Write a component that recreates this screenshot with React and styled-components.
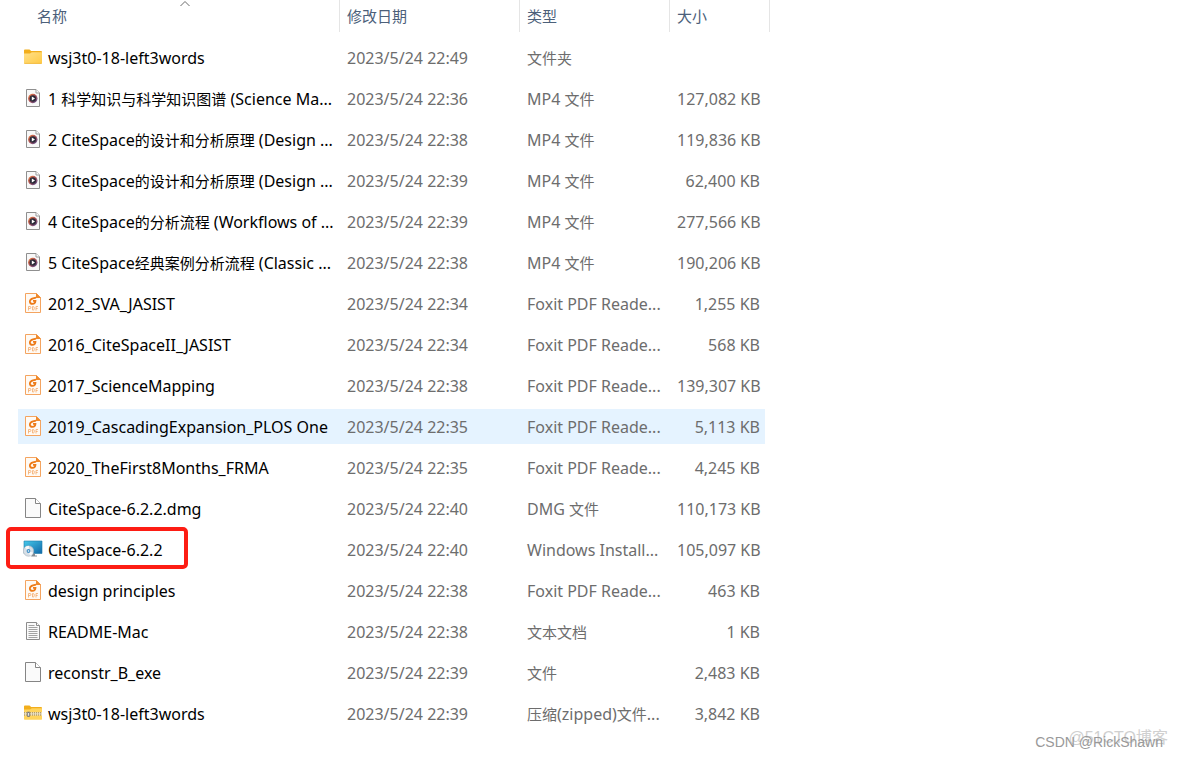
import React from 'react';
import styled, { createGlobalStyle } from 'styled-components';

const colors = {
  text: '#000000',
  muted: '#6d6d6d',
  header: '#4c607a',
  divider: '#e5e5e5',
  hover: '#e5f3ff',
  mark: '#fd1d14',
  orange: '#f4a460'
};

const GlobalStyle = createGlobalStyle`
  body {
    margin: 0;
    background-color: #fff;
    font-family: 'Noto Sans', 'Noto Sans CJK SC', sans-serif;
    font-size: 16px;
  }
`;

const Page = styled.main`
  position: relative;
  box-sizing: border-box;
  min-height: 100vh;
  padding-left: 18px;
`;

const FileTable = styled.table`
  width: 100%;
  max-width: 752px;
  table-layout: fixed;
  border-spacing: 0;
  line-height: 20px;
`;

const Column = styled.col`
  width: ${props => props.$width};
`;

const HeaderCell = styled.th`
  position: relative;
  padding: 0 0 5px;
  text-align: left;
  font-weight: normal;
  font-size: 15px;
  color: ${colors.header};
`;

const HeaderLabel = styled.div`
  box-sizing: border-box;
  height: 32px;
  padding: 6px 0 6px ${props => props.$indent || '7px'};
  border-right: 1px solid ${colors.divider};
`;

const SortArrow = styled.svg`
  position: absolute;
  top: 0;
  left: calc(50% + 1px);
  width: 10px;
  height: 7px;
`;

const Cell = styled.td`
  box-sizing: border-box;
  height: 41px;
  padding: 0 0 0 7px;
  border: 0 solid transparent;
  border-width: 3px 0;
  background-clip: padding-box;
  white-space: nowrap;
  color: ${colors.muted};
`;

const NameCell = styled(Cell)`
  position: relative;
  padding-left: 5px;
  color: ${colors.text};
`;

const SizeCell = styled(Cell)`
  padding-right: 5px;
  border-right-width: 5px;
  text-align: right;
`;

const FileRow = styled.tr`
  ${Cell} {
    background-color: ${props => (props.$hovered ? colors.hover : 'transparent')};
  }
`;

const FileName = styled.div`
  display: flex;
  align-items: center;
  gap: 5px;
`;

const Han = styled.span`
  font-size: 15px;
`;

const Icon = styled.svg`
  flex: none;
  width: 20px;
  height: 20px;
  margin-bottom: 2px;
`;

const Highlight = styled.div`
  position: absolute;
  box-sizing: border-box;
  top: -5px;
  left: -12px;
  width: 182px;
  height: 42px;
  border: 4px solid ${colors.mark};
  border-radius: 5px;
  pointer-events: none;
`;

const Watermark = styled.span`
  position: absolute;
  right: ${props => props.$right};
  bottom: ${props => props.$bottom};
  color: ${props => props.$color};
  font-family: 'Liberation Sans', 'Noto Sans CJK SC', sans-serif;
  font-size: ${props => props.$size};
  line-height: 20px;
`;

const FolderIcon = () => (
  <Icon viewBox="0 0 20 20" aria-hidden="true">
    <defs>
      <linearGradient id="folder" x1="0" y1="0" x2="1" y2="1">
        <stop offset="0" stopColor="#ffe08a" />
        <stop offset="1" stopColor="#ffca45" />
      </linearGradient>
    </defs>
    <path d="M1 3.5q0-.9.9-.9h4.6l1.7 1.5H18q1 0 1 1V8H1z" fill="#f2ae1c" />
    <path d="M1 6.5h6l1.800-1.300H19V16q0 .7-.7.7H1.700q-.7 0-.7-.7z" fill="url(#folder)" />
    <path d="M1.300 16.400h17.400" stroke="#eeb22e" strokeWidth=".7" />
  </Icon>
);

const ZipIcon = () => (
  <Icon viewBox="0 0 20 20" aria-hidden="true">
    <path d="M1 3.5q0-.9.9-.9h4.6l1.7 1.5H18q1 0 1 1V8H1z" fill="#f2ae1c" />
    <path d="M1 6.5h6l1.800-1.300H19V16q0 .7-.7.7H1.700q-.7 0-.7-.7z" fill="#ffd45c" />
    <path d="M1 9.200h18v3.300H1z" fill="#e9dfc3" />
    <path d="M1 9.800h18M1 12h18" stroke="#9a8047" strokeWidth="1" strokeDasharray="1 1" />
    <path d="M4.200 8.700h2.600v5.200H4.200z" fill="#787a7c" />
    <path d="M5 10h1v2.800H5z" fill="#e6e6e6" />
  </Icon>
);

const BlankIcon = () => (
  <Icon viewBox="0 0 20 20" aria-hidden="true">
    <path d="M2.500.5h10l5 5v14h-15z" fill="#fafafa" stroke="#858585" />
    <path d="M12.500.5v5h5" fill="#fff" stroke="#858585" />
  </Icon>
);

const TextIcon = () => (
  <Icon viewBox="0 0 20 20" aria-hidden="true">
    <path d="M3.500 1.500h10l3 3v14h-13z" fill="#fafafa" stroke="#8c8c8c" />
    <path d="M13.500 1.500v3h3" fill="#fff" stroke="#8c8c8c" />
    <path
      d="M5.500 4.500h6M5.500 6.500h9M5.500 8.500h9M5.500 10.500h9M5.500 12.500h9M5.500 14.500h9M5.500 16.500h9"
      stroke="#a3a3a3"
    />
  </Icon>
);

const VideoIcon = () => (
  <Icon viewBox="0 0 20 20" aria-hidden="true">
    <defs>
      <linearGradient id="disc" x1="0" y1="0" x2="1" y2="1">
        <stop offset="0" stopColor="#f0803a" />
        <stop offset=".5" stopColor="#a8505a" />
        <stop offset="1" stopColor="#4d4a93" />
      </linearGradient>
    </defs>
    <path d="M3.500 1.500h9.500l3.500 3.500v13.500h-13z" fill="#f8f8f8" stroke="#8f8f8f" />
    <path d="M13 1.500v3.500h3.500" fill="#fff" stroke="#9b9b9b" />
    <circle cx="9.800" cy="10.500" r="4.700" fill="url(#disc)" />
    <circle cx="9.800" cy="10.500" r="3.200" fill="#2a2937" />
    <path d="M8.800 8.500v4l3.200-2z" fill="#fff" />
  </Icon>
);

const PdfIcon = () => (
  <Icon viewBox="0 0 20 20" aria-hidden="true">
    <path d="M2.500.5h11l4 4v15h-15z" fill="#fffaf4" stroke={colors.orange} />
    <path d="M13 0 18 5h-5z" fill="#f08a2c" />
    <path
      d="M13 4.700 10 5.300Q7 6 6.800 8.600q.1 2.300 2.700 2.300 2.700 0 3-3H10"
      fill="none"
      stroke="#ed7b18"
      strokeWidth="1.700"
    />
    <path
      d="M5.500 17.500v-4H7q.9 0 .9 1t-.9 1H5.500M9.500 17v-3.500h.8q1 0 1 1.800t-1 1.700H9.500M13 17.500v-4h2M13 15.500h1.700"
      fill="none"
      stroke="#f4ab6c"
      strokeWidth=".8"
    />
  </Icon>
);

const InstallerIcon = () => (
  <Icon viewBox="0 0 20 20" aria-hidden="true">
    <defs>
      <linearGradient id="screen" x1="0" y1="0" x2="1" y2="1">
        <stop offset="0" stopColor="#45c9ea" />
        <stop offset="1" stopColor="#1267a8" />
      </linearGradient>
    </defs>
    <path d="M1 2h18v12.500H1z" fill="url(#screen)" />
    <path d="M1 2h18v12.500H1z" fill="none" stroke="#1b79a8" strokeWidth=".6" />
    <path d="M10 14.500h2v2h2v1H8z" fill="#878e94" />
    <circle cx="5.500" cy="12" r="5.200" fill="#d8dfe6" stroke="#a9b4bd" strokeWidth=".6" />
    <path d="M5.500 12 2 8.300A5 5 0 0 1 6 7zM5.500 12l4.700 1.800A5 5 0 0 1 7 16.700z" fill="#f8fafb" />
    <circle cx="5.500" cy="12" r="1.900" fill="#3e8fc7" />
    <circle cx="5.500" cy="12" r=".8" fill="#fff" />
  </Icon>
);

const icons = {
  folder: FolderIcon,
  zip: ZipIcon,
  blank: BlankIcon,
  text: TextIcon,
  video: VideoIcon,
  pdf: PdfIcon,
  installer: InstallerIcon
};

const files = [
  { icon: 'folder', name: 'wsj3t0-18-left3words', date: '2023/5/24 22:49', type: '文件夹', size: '' },
  { icon: 'video', name: '1 科学知识与科学知识图谱 (Science Ma...', date: '2023/5/24 22:36', type: 'MP4 文件', size: '127,082 KB' },
  { icon: 'video', name: '2 CiteSpace的设计和分析原理 (Design ...', date: '2023/5/24 22:38', type: 'MP4 文件', size: '119,836 KB' },
  { icon: 'video', name: '3 CiteSpace的设计和分析原理 (Design ...', date: '2023/5/24 22:39', type: 'MP4 文件', size: '62,400 KB' },
  { icon: 'video', name: '4 CiteSpace的分析流程 (Workflows of ...', date: '2023/5/24 22:39', type: 'MP4 文件', size: '277,566 KB' },
  { icon: 'video', name: '5 CiteSpace经典案例分析流程 (Classic ...', date: '2023/5/24 22:38', type: 'MP4 文件', size: '190,206 KB' },
  { icon: 'pdf', name: '2012_SVA_JASIST', date: '2023/5/24 22:34', type: 'Foxit PDF Reade...', size: '1,255 KB' },
  { icon: 'pdf', name: '2016_CiteSpaceII_JASIST', date: '2023/5/24 22:34', type: 'Foxit PDF Reade...', size: '568 KB' },
  { icon: 'pdf', name: '2017_ScienceMapping', date: '2023/5/24 22:38', type: 'Foxit PDF Reade...', size: '139,307 KB' },
  { icon: 'pdf', name: '2019_CascadingExpansion_PLOS One', date: '2023/5/24 22:35', type: 'Foxit PDF Reade...', size: '5,113 KB', hovered: true },
  { icon: 'pdf', name: '2020_TheFirst8Months_FRMA', date: '2023/5/24 22:35', type: 'Foxit PDF Reade...', size: '4,245 KB' },
  { icon: 'blank', name: 'CiteSpace-6.2.2.dmg', date: '2023/5/24 22:40', type: 'DMG 文件', size: '110,173 KB' },
  { icon: 'installer', name: 'CiteSpace-6.2.2', date: '2023/5/24 22:40', type: 'Windows Install...', size: '105,097 KB', marked: true },
  { icon: 'pdf', name: 'design principles', date: '2023/5/24 22:38', type: 'Foxit PDF Reade...', size: '463 KB' },
  { icon: 'text', name: 'README-Mac', date: '2023/5/24 22:38', type: '文本文档', size: '1 KB' },
  { icon: 'blank', name: 'reconstr_B_exe', date: '2023/5/24 22:39', type: '文件', size: '2,483 KB' },
  { icon: 'zip', name: 'wsj3t0-18-left3words', date: '2023/5/24 22:39', type: '压缩(zipped)文件...', size: '3,842 KB' }
];

// Chinese runs are set one size smaller than the latin text around them
const MixedText = ({ children }) => (
  <span>
    {children.split(/([\u4e00-\u9fff]+)/).map((part, index) => (
      index % 2 ? <Han key={index}>{part}</Han> : part
    ))}
  </span>
);

const File = ({ file }) => {
  const FileIcon = icons[file.icon];

  return (
    <FileRow $hovered={file.hovered}>
      <NameCell>
        <FileName>
          <FileIcon />
          <MixedText>{file.name}</MixedText>
        </FileName>
        {file.marked && <Highlight />}
      </NameCell>
      <Cell>{file.date}</Cell>
      <Cell><MixedText>{file.type}</MixedText></Cell>
      <SizeCell>{file.size}</SizeCell>
    </FileRow>
  );
};

const App = () => {
  return (
    <Page>
      <GlobalStyle />
      <FileTable>
        <colgroup>
          <Column $width="322px" />
          <Column $width="180px" />
          <Column $width="150px" />
          <Column $width="100px" />
        </colgroup>
        <thead>
          <tr>
            <HeaderCell scope="col" aria-sort="ascending">
              <HeaderLabel $indent="19px">名称</HeaderLabel>
              <SortArrow viewBox="0 0 10 7" aria-hidden="true">
                <path d="M.5 6 5 1.500 9.500 6" fill="none" stroke="#6b6b6b" />
              </SortArrow>
            </HeaderCell>
            <HeaderCell scope="col"><HeaderLabel>修改日期</HeaderLabel></HeaderCell>
            <HeaderCell scope="col"><HeaderLabel>类型</HeaderLabel></HeaderCell>
            <HeaderCell scope="col"><HeaderLabel>大小</HeaderLabel></HeaderCell>
          </tr>
        </thead>
        <tbody>
          {files.map((file, index) => (
            <File key={index} file={file} />
          ))}
        </tbody>
      </FileTable>
      <Watermark $right="10px" $bottom="9px" $color="#d0d0d0" $size="16px">
        @51CTO博客
      </Watermark>
      <Watermark $right="15px" $bottom="5px" $color="#999999" $size="14px">
        CSDN @RickShawn
      </Watermark>
    </Page>
  );
};

export default App;
